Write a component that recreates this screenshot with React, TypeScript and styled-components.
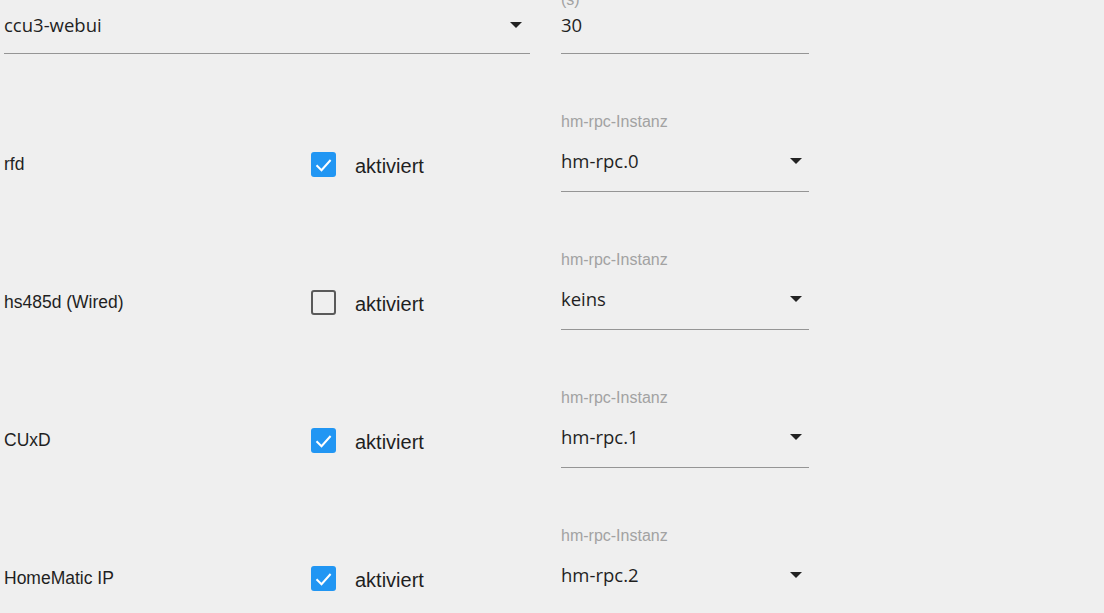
import React from "react";
import styled, { createGlobalStyle } from "styled-components";

const GlobalStyle = createGlobalStyle`
  html, body {
    margin: 0;
    padding: 0;
    background: #efefef;
    overflow: hidden;
  }
  body {
    font-family: "Liberation Sans", Arial, sans-serif;
    color: #1f1f1f;
  }
`;

const Page = styled.div`
  display: flex;
  flex-direction: column;
  width: 805px;
  padding-left: 4px;
  margin-top: -9px;
`;

const Row = styled.div<{ $top?: boolean }>`
  display: grid;
  grid-template-columns: 276px 219px 248px;
  column-gap: 31px;
  align-items: end;
  height: ${(p) => (p.$top ? "63px" : "138px")};
`;

const WideCell = styled.div`
  grid-column: 1 / span 2;
`;

const Field = styled.div<{ $top?: boolean }>`
  display: flex;
  flex-direction: column;
  gap: ${(p) => (p.$top ? "1px" : "15px")};
`;

const Hint = styled.div`
  font-family: "Liberation Sans", Arial, sans-serif;
  font-size: 16px;
  line-height: 18px;
  height: 18px;
  color: #a2a2a2;
  white-space: nowrap;
`;

const Input = styled.div<{ $top?: boolean; $line?: boolean }>`
  display: flex;
  align-items: center;
  justify-content: space-between;
  padding: 2px 0 ${(p) => (p.$top ? "15px" : "17px")};
  border-bottom: 1px solid ${(p) => (p.$line === false ? "transparent" : "#959595")};
  font-family: "Open Sans", "Noto Sans", sans-serif;
  font-size: 18.5px;
  line-height: 26px;
  color: #1f1f1f;
`;

const Arrow = styled.svg<{ $inset: number }>`
  width: 12px;
  height: 6px;
  margin-right: ${(p) => p.$inset}px;
  flex: none;
`;

const Label = styled.div`
  height: 56px;
  display: flex;
  align-items: center;
  font-size: 17.5px;
  color: #1f1f1f;
  white-space: nowrap;
`;

const CheckCell = styled.label`
  height: 56px;
  display: flex;
  align-items: center;
  gap: 19px;
`;

const Box = styled.span<{ $checked: boolean }>`
  width: 25px;
  height: 25px;
  box-sizing: border-box;
  border-radius: 3px;
  flex: none;
  display: flex;
  align-items: center;
  justify-content: center;
  background: ${(p) => (p.$checked ? "#2196f3" : "transparent")};
  border: ${(p) => (p.$checked ? "none" : "2.3px solid #5a5a5a")};
`;

const CheckText = styled.span`
  font-size: 20px;
  color: #1f1f1f;
  padding-top: 5px;
`;

const DropArrow = ({ inset }: { inset: number }) => (
  <Arrow $inset={inset} viewBox="0 0 12 6">
    <path d="M0 0h12L6 6z" fill="#222" />
  </Arrow>
);

const Checkbox = ({ checked }: { checked: boolean }) => (
  <Box $checked={checked}>
    {checked && (
      <svg width="25" height="25" viewBox="0 0 25 25">
        <polyline
          points="5.5,13.3 10.5,18.2 19.6,8"
          fill="none"
          stroke="#fff"
          strokeWidth="2"
        />
      </svg>
    )}
  </Box>
);

const rows = [
  { name: "rfd", checked: true, value: "hm-rpc.0" },
  { name: "hs485d (Wired)", checked: false, value: "keins" },
  { name: "CUxD", checked: true, value: "hm-rpc.1" },
  { name: "HomeMatic IP", checked: true, value: "hm-rpc.2", last: true },
];

export default function App() {
  return (
    <>
      <GlobalStyle />
      <Page>
        <Row $top>
          <WideCell>
            <Input $top>
              <span>ccu3-webui</span>
              <DropArrow inset={8} />
            </Input>
          </WideCell>
          <Field $top>
            <Hint>(s)</Hint>
            <Input $top>
              <span>30</span>
            </Input>
          </Field>
        </Row>
        {rows.map((r) => (
          <Row key={r.name}>
            <Label>{r.name}</Label>
            <CheckCell>
              <Checkbox checked={r.checked} />
              <CheckText>aktiviert</CheckText>
            </CheckCell>
            <Field>
              <Hint>hm-rpc-Instanz</Hint>
              <Input $line={!r.last}>
                <span>{r.value}</span>
                <DropArrow inset={7} />
              </Input>
            </Field>
          </Row>
        ))}
      </Page>
    </>
  );
}
